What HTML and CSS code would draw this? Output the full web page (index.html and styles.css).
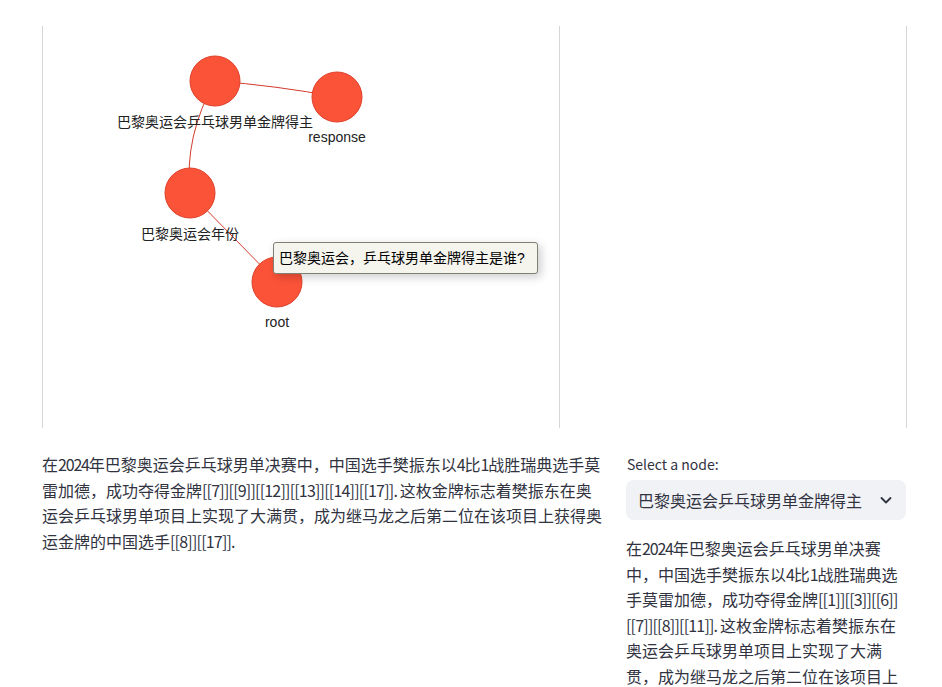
FILE: index.html
```html
<!DOCTYPE html>
<html lang="zh">
<head>
<meta charset="utf-8">
<title>Graph</title>
<link rel="stylesheet" href="styles.css">
</head>
<body>
<div class="main">
  <div class="graph-card">
    <div class="network">
      <svg class="canvas" width="516" height="402" viewBox="43 26 516 402">
        <g class="edges">
          <path d="M215 81 Q276 85.5 337 97"/>
          <path d="M215 81 Q184 137 190 193"/>
          <path d="M190 193 L277 282"/>
        </g>
        <g class="nodes">
          <circle cx="215" cy="81" r="25"/>
          <circle cx="337" cy="97" r="25"/>
          <circle cx="190" cy="193" r="25"/>
          <circle cx="277" cy="282" r="25"/>
        </g>
        <g class="labels">
          <text x="215" y="127">巴黎奥运会乒乓球男单金牌得主</text>
          <text x="337" y="142">response</text>
          <text x="190" y="239">巴黎奥运会年份</text>
          <text x="277" y="327">root</text>
        </g>
      </svg>
      <div class="tooltip">巴黎奥运会，乒乓球男单金牌得主是谁?</div>
    </div>
  </div>
  <div class="columns">
    <div class="col">
      <p class="md">在<span class="num">2024</span>年巴黎奥运会乒乓球男单决赛中，中国选手樊振东以<span class="num">4</span>比<span class="num">1</span>战胜瑞典选手莫雷加德，成功夺得金牌<span class="lat">[[7]][[9]][[12]][[13]][[14]][[17]]. </span>这枚金牌标志着樊振东在奥运会乒乓球男单项目上实现了大满贯，成为继马龙之后第二位在该项目上获得奥运金牌的中国选手<span class="lat">[[8]][[17]].</span></p>
    </div>
    <div class="col">
      <div class="select-widget">
        <div class="select-label">Select a node:</div>
        <div class="select-box">
          <span class="select-value">巴黎奥运会乒乓球男单金牌得主</span>
          <svg class="chevron" width="20" height="20" viewBox="0 0 20 20"><path d="M5.5 8 L10 12.5 L14.5 8"/></svg>
        </div>
      </div>
      <p class="md">在<span class="num">2024</span>年巴黎奥运会乒乓球男单决赛中，中国选手樊振东以<span class="num">4</span>比<span class="num">1</span>战胜瑞典选手莫雷加德，成功夺得金牌<span class="lat">[[1]][[3]][[6]][[7]][[8]][[11]]. </span>这枚金牌标志着樊振东在奥运会乒乓球男单项目上实现了大满贯，成为继马龙之后第二位在该项目上获得奥运金牌的中国选手<span class="lat">[[8]][[11]].</span></p>
    </div>
  </div>
</div>
</body>
</html>
```
FILE: styles.css
```css
html, body {
  margin: 0;
  padding: 0;
  background: #ffffff;
}
body {
  font-family: "Noto Sans CJK SC", sans-serif;
  color: rgb(49, 51, 63);
  overflow: hidden;
}
.main {
  padding: 26px 0 0 42px;
  width: 864px;
}
.graph-card {
  display: flex;
  width: 865px;
  height: 402px;
  box-sizing: border-box;
  border-left: 1px solid #d6d6d6;
  border-right: 1px solid #d6d6d6;
}
.network {
  position: relative;
  width: 517px;
  height: 402px;
  box-sizing: border-box;
  border-right: 1px solid #d6d6d6;
  background: #ffffff;
}
.canvas {
  display: block;
}
.edges path {
  fill: none;
  stroke: #d23b2c;
  stroke-width: 1;
}
.nodes circle {
  fill: #fb5338;
  stroke: #df3f2a;
  stroke-width: 1;
}
.labels text {
  font-family: "Liberation Sans", "Noto Sans CJK SC", sans-serif;
  font-size: 14px;
  fill: #222222;
  text-anchor: middle;
}
.tooltip {
  position: absolute;
  left: 230px;
  top: 216px;
  white-space: nowrap;
  padding: 5px 12px 5px 5px;
  font-family: "Liberation Sans", "Noto Sans CJK SC", sans-serif;
  font-size: 14px;
  line-height: 20px;
  color: #000000;
  background: #f5f4ed;
  border: 1px solid #808074;
  border-radius: 3px;
  box-shadow: 3px 3px 10px rgba(0, 0, 0, 0.2);
}
.columns {
  display: grid;
  grid-template-columns: 560px 280px;
  column-gap: 24px;
  margin-top: 24px;
}
.col {
  display: flex;
  flex-direction: column;
  gap: 16px;
  min-width: 0;
}
.md {
  margin: 0;
  font-size: 16px;
  line-height: 1.6;
}
.lat {
  letter-spacing: -0.8px;
}
.num {
  letter-spacing: -1.2px;
}
.select-widget {
  display: flex;
  flex-direction: column;
}
.select-label {
  font-size: 14px;
  line-height: 24px;
  min-height: 24px;
  margin-bottom: 4px;
  padding-left: 1px;
}
.select-box {
  display: flex;
  align-items: center;
  justify-content: space-between;
  height: 40px;
  box-sizing: border-box;
  padding: 0 10px 0 12px;
  background: rgb(240, 242, 246);
  border-radius: 8px;
  font-size: 16px;
}
.chevron path {
  fill: none;
  stroke: rgb(49, 51, 63);
  stroke-width: 1.8;
  stroke-linecap: round;
  stroke-linejoin: round;
}
```
